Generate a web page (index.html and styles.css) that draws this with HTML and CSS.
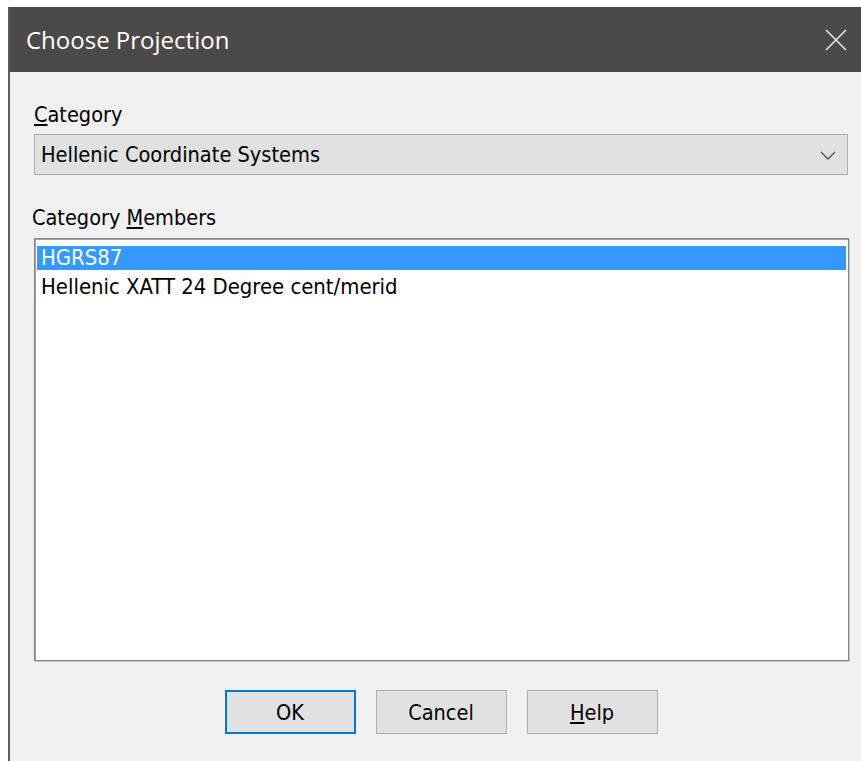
FILE: index.html
```html
<!DOCTYPE html>
<html>
<head>
<meta charset="utf-8">
<title>Choose Projection</title>
<link rel="stylesheet" href="styles.css">
</head>
<body>
<div class="window">
  <div class="titlebar">
    <span class="title">Choose Projection</span>
    <span class="close">
      <svg width="22" height="22" viewBox="0 0 22 22"><path d="M1 1 L21 21 M21 1 L1 21" stroke="#e8e8e8" stroke-width="1.6" fill="none"/></svg>
    </span>
  </div>
  <div class="content">
    <div class="label"><u>C</u>ategory</div>
    <div class="combo">
      <span>Hellenic Coordinate Systems</span>
      <svg class="chev" width="16" height="10" viewBox="0 0 16 10"><path d="M1 1 L8 8 L15 1" stroke="#555" stroke-width="1.4" fill="none"/></svg>
    </div>
    <div class="label members">Category <u>M</u>embers</div>
    <div class="list">
      <div class="item selected">HGRS87</div>
      <div class="item">Hellenic XATT 24 Degree cent/merid</div>
    </div>
    <div class="buttons">
      <button class="btn default">OK</button>
      <button class="btn">Cancel</button>
      <button class="btn"><u>H</u>elp</button>
    </div>
  </div>
</div>
</body>
</html>
```
FILE: styles.css
```css
html, body {
  margin: 0;
  padding: 0;
  background: #ffffff;
  height: 100%;
  overflow: hidden;
}
body {
  font-family: "DejaVu Sans Condensed", "DejaVu Sans", sans-serif;
  font-stretch: condensed;
}
.window {
  margin: 7px 0 0 8px;
  border-left: 2px solid #5c5c5c;
  height: 754px;
  display: flex;
  flex-direction: column;
}
.titlebar {
  height: 65px;
  flex: none;
  background: #4b4a48;
  display: flex;
  align-items: center;
  justify-content: space-between;
  padding: 0 14px 0 16px;
}
.title {
  font-family: "Open Sans", "Noto Sans", sans-serif;
  font-stretch: normal;
  font-size: 24px;
  color: #ffffff;
}
.close {
  display: flex;
  margin-top: 1px;
}
.content {
  flex: 1;
  background: #f0f0f0;
  padding: 31px 13px 0 24px;
  display: flex;
  flex-direction: column;
}
.label {
  font-size: 21.5px;
  color: #000;
  line-height: 24px;
}
.members {
  margin-top: 31px;
  margin-left: -2px;
}
.combo {
  margin-top: 7px;
  height: 41px;
  box-sizing: border-box;
  border: 1px solid #adadad;
  background: #e1e1e1;
  display: flex;
  align-items: center;
  justify-content: space-between;
  padding: 0 11px 0 6px;
  font-size: 21.6px;
}
.chev {
  margin-top: 2px;
}
.list {
  margin-top: 8px;
  height: 423px;
  box-sizing: border-box;
  border: 1px solid #828790;
  box-shadow: inset 1px 1px 0 #a0a0a0, 1px 1px 0 #c8c8c8;
  background: #ffffff;
  padding: 7px 2px;
  margin-right: -1px;
}
.item {
  height: 24px;
  line-height: 24px;
  font-size: 21.9px;
  padding-left: 4px;
  margin-bottom: 5px;
}
.selected {
  background: #3399ff;
  color: #ffffff;
}
.buttons {
  margin-top: 29px;
  display: flex;
  justify-content: center;
  gap: 20px 19px;
  column-gap: 20px;
}
.btn {
  width: 131px;
  height: 44px;
  border: 1px solid #adadad;
  background: #e1e1e1;
  font-family: "DejaVu Sans Condensed", "DejaVu Sans", sans-serif;
  font-stretch: condensed;
  font-size: 21.5px;
  color: #000;
  padding: 0;
}
.btn.default {
  border: 2px solid #0078d7;
}
```
